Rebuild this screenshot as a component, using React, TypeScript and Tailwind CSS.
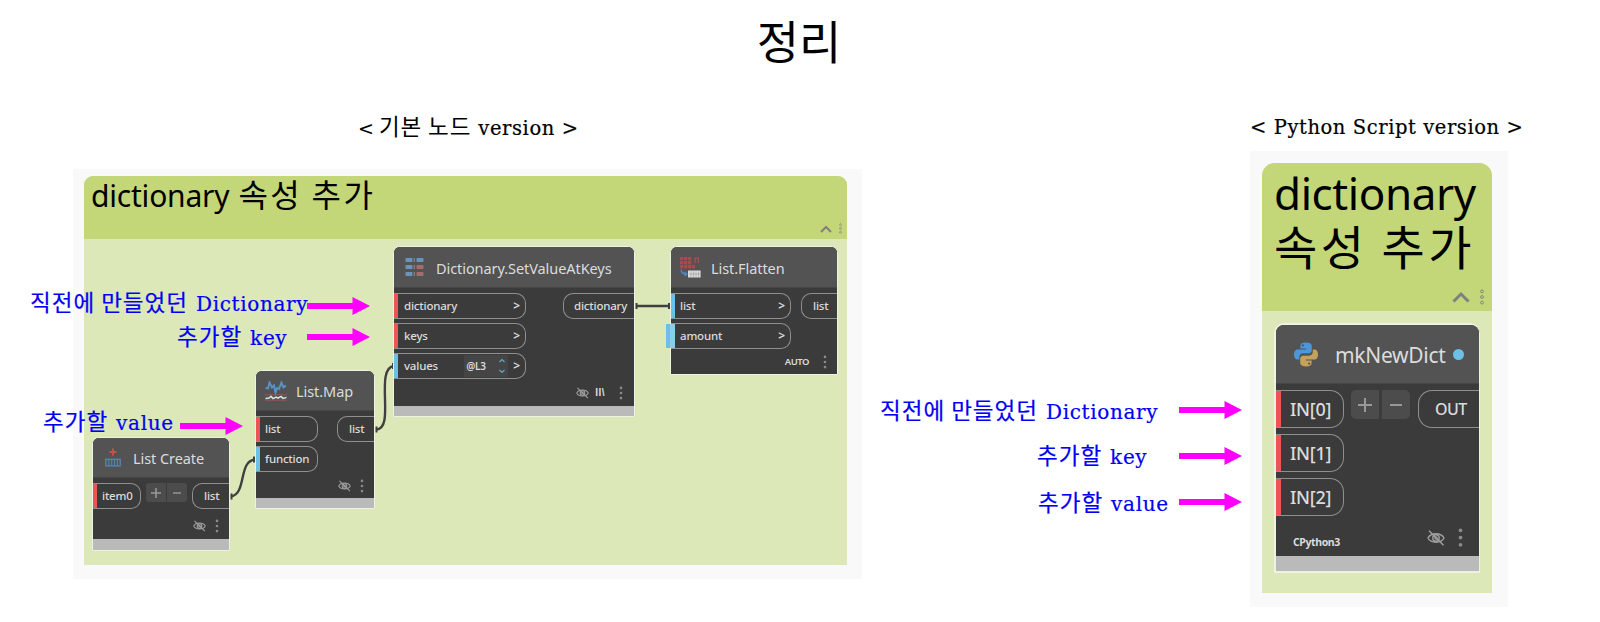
import React from 'react';

const sans = "font-['Noto_Sans','Noto_Sans_CJK_KR',sans-serif]";
const serif = "font-['DejaVu_Serif',serif]";
const hangul = "font-['Noto_Sans_CJK_KR',sans-serif]";

/* ---------- icons ---------- */

function EyeOff({ className }: { className: string }) {
  return (
    <svg viewBox="0 0 18 16" className={className} fill="none" stroke="#a0a0a0" strokeWidth="1.4">
      <path d="M1 8C4 2.4 14 2.4 17 8C14 13.6 4 13.6 1 8Z" />
      <circle cx="9" cy="8" r="3.2" />
      <circle cx="9" cy="8" r="1" />
      <path d="M2 0.8L16.500 15.200" />
    </svg>
  );
}

function Dots({ className }: { className: string }) {
  return (
    <svg viewBox="0 0 4 16" className={className} fill="#8a8a8a">
      <circle cx="2" cy="2.2" r="1.5" />
      <circle cx="2" cy="8" r="1.5" />
      <circle cx="2" cy="13.8" r="1.5" />
    </svg>
  );
}

function RingDots({ className }: { className: string }) {
  return (
    <svg viewBox="0 0 4 16" className={className} fill="none" stroke="#84887a" strokeWidth="1">
      <circle cx="2" cy="2.4" r="1.4" />
      <circle cx="2" cy="8" r="1.4" />
      <circle cx="2" cy="13.6" r="1.4" />
    </svg>
  );
}

function Caret({ className }: { className: string }) {
  return (
    <svg viewBox="0 0 18 12" className={className} fill="none" stroke="#808080" strokeWidth="3">
      <path d="M1.5 10.5L9 3L16.5 10.5" />
    </svg>
  );
}

function DictIcon() {
  const rows = [0, 7, 14];
  return (
    <svg viewBox="0 0 19 18" className="h-[18px] w-[19px] shrink-0">
      {rows.map((y) => (
        <g key={y}>
          <rect x="0.5" y={y} width="7" height="4" rx="0.8" fill="#6c93be" />
          <rect x="8.7" y={y} width="1.4" height="4" fill="#7f7f7f" />
          <rect x="11.5" y={y} width="7" height="4" rx="0.8" fill={y === 0 ? '#6c93be' : '#a86a6a'} />
        </g>
      ))}
    </svg>
  );
}

function FlattenIcon() {
  return (
    <svg viewBox="0 0 21 21" className="h-[21px] w-[21px] shrink-0">
      {[0, 4, 8].map((y) =>
        [0, 4, 8].map((x) => <rect key={`${x}-${y}`} x={x} y={y} width="3.3" height="3.3" fill="#b04848" />),
      )}
      <rect x="12" y="8" width="3" height="3.3" fill="#b04848" />
      <path d="M15 6V1.2H18.4V6" fill="none" stroke="#a05252" strokeWidth="1.3" />
      <path d="M1.2 12.5C1.2 15.5 3 17 6 17M4.4 15L6.8 17L4.6 19" fill="none" stroke="#4d86c4" strokeWidth="1.5" />
      <rect x="8" y="13.5" width="12.6" height="7" fill="#dcdcdc" />
      <path d="M9 17H20M11 14.5V20M13.5 14.5V20M16 14.5V20M18.5 14.5V20" stroke="#9a9a9a" strokeWidth="0.6" />
    </svg>
  );
}

function MapIcon() {
  return (
    <svg viewBox="0 0 22 20" className="h-5 w-[22px] shrink-0" fill="none">
      <path d="M0.5 7L3 7.5L4.5 1.5L7 6.5L9 4.5L10.5 11.5L12 7L14 8L16.5 1.5L18.5 6.5L21 4.5" stroke="#5b92c7" strokeWidth="1.9" />
      <path d="M0 13.8H22M0 19.2H22" stroke="#9a5656" strokeWidth="1" />
      <path d="M0.5 17.4L4 17L6 15.4L8 17.6L11 16L13 17.2L16 15.4L18 17.4L21.5 16.4" stroke="#e0e0e0" strokeWidth="1.5" />
    </svg>
  );
}

function CreateIcon() {
  return (
    <svg viewBox="0 0 16 19" className="h-[19px] w-4 shrink-0" fill="none">
      <path d="M8 0.5V7.5M4.5 4H11.5" stroke="#d24b4b" strokeWidth="1.9" />
      <rect x="0.8" y="11.3" width="14.4" height="6.6" stroke="#4d88c0" strokeWidth="1.3" />
      <path d="M3.8 11V18M6.7 11V18M9.5 11V18M12.3 11V18" stroke="#4d88c0" strokeWidth="1.1" />
    </svg>
  );
}

function PythonIcon() {
  return (
    <svg viewBox="0 0 24 24" className="h-[25px] w-6 shrink-0">
      <path
        fill="#4a97dc"
        d="M11.6 0C8 0 6.4 1.2 6.4 3.4V6H12.2V7H3.6C1.2 7 0 9 0 12C0 15 1.2 17 3.6 17H5.4V14.2C5.4 12 7 10.8 9 10.8H14.8C16.6 10.8 17.8 9.4 17.8 7.8V3.4C17.8 1.2 15.6 0 11.6 0ZM8.8 1.8A1.1 1.1 0 1 1 8.8 4A1.1 1.1 0 1 1 8.8 1.8Z"
      />
      <path
        fill="#c4a25a"
        d="M12.4 24C16 24 17.6 22.8 17.6 20.6V18H11.8V17H20.4C22.8 17 24 15 24 12C24 9 22.8 7 20.4 7H18.8V9.6C18.8 11.8 17 13.2 15 13.2H9.2C7.4 13.2 6.2 14.6 6.2 16.2V20.6C6.2 22.8 8.4 24 12.4 24ZM15.2 22.2A1.1 1.1 0 1 1 15.2 20A1.1 1.1 0 1 1 15.2 22.2Z"
      />
    </svg>
  );
}

function Arrow({ className }: { className: string }) {
  return (
    <svg viewBox="0 0 63 18" className={`absolute h-[18px] w-[63px] ${className}`}>
      <path d="M0 6H45.5V0L63 9L45.5 18V12H0Z" fill="#ff00ff" />
    </svg>
  );
}

/* ---------- node parts ---------- */

type NodeProps = {
  className: string;
  header: string;
  icon: React.ReactNode;
  title: React.ReactNode;
  footer?: string;
  children: React.ReactNode;
};

function GraphNode({ className, header, icon, title, footer, children }: NodeProps) {
  return (
    <section
      className={`absolute flex flex-col border-[#eef2e4] bg-[#3b3b3b] text-[#dcdcdc] ${sans} ${className}`}
    >
      <header className={`flex shrink-0 items-center border-b border-[#464646] bg-[#535353] ${header}`}>
        {icon}
        {title}
      </header>
      <div className="flex min-h-0 flex-1 flex-col">{children}</div>
      {footer && <div className={`shrink-0 bg-[#bababa] ${footer}`} />}
    </section>
  );
}

function Title({ children }: { children: string }) {
  return <h3 className="pt-0.5 text-[14.5px] leading-none tracking-[-0.07px]">{children}</h3>;
}

const small = 'h-[26px] text-[11.5px] tracking-[-0.2px] rounded-r-[10px]';
const smallOut = 'h-[26px] text-[11.5px] tracking-[-0.2px] rounded-l-[10px]';
const large = 'h-[38px] text-[18px] tracking-[-0.3px] rounded-r-[14px]';

function InPort({
  label,
  blue,
  size = small,
  bar = 'mr-[5px] w-1',
  className,
  children,
}: {
  label: string;
  blue?: boolean;
  size?: string;
  bar?: string;
  className: string;
  children?: React.ReactNode;
}) {
  return (
    <div
      className={`flex items-center border border-l-0 border-[#8f8f8f] leading-none font-medium ${size} ${className}`}
    >
      <span className={`h-full shrink-0 ${bar} ${blue ? 'bg-[#6ac0e7]' : 'bg-[#eb5555]'}`} />
      <span>{label}</span>
      {children}
    </div>
  );
}

function OutPort({ label, size = smallOut, className }: { label: string; size?: string; className: string }) {
  return (
    <div
      className={`flex items-center border border-r-0 border-[#8f8f8f] leading-none font-medium ${size} ${className}`}
    >
      {label}
    </div>
  );
}

function Level() {
  return <span className="mr-[5px] ml-auto text-[12px] font-semibold">&gt;</span>;
}

/* ---------- captions ---------- */

function Caption({ ko, en, className }: { ko: string; en: string; className: string }) {
  return (
    <p className={`absolute flex h-8 items-baseline whitespace-pre text-[#0000f5] [-webkit-text-stroke:0.2px_#0000f5] ${className}`}>
      <span className={`text-[22.5px] leading-8 tracking-[1px] ${hangul}`}>{ko}</span>
      <span className={`ml-2 text-[20px] leading-8 tracking-[0.65px] ${serif}`}>{en}</span>
    </p>
  );
}

export default function App() {
  return (
    <main className="relative h-[622px] w-[1600px] overflow-hidden bg-white text-black">
      <h1 className={`pt-[9px] pr-0.5 text-center text-[46px] leading-[60px] ${hangul}`}>정리</h1>

      <h2 className="absolute top-[109px] left-[358px] flex items-baseline whitespace-pre">
        <span className={`text-[19px] leading-8 ${serif}`}>&lt;</span>
        <span className={`ml-[5px] text-[22.5px] leading-8 tracking-[0.9px] ${hangul}`}>기본 노드</span>
        <span className={`ml-[7px] text-[19.5px] leading-8 tracking-[0.6px] [-webkit-text-stroke:0.2px_#000] ${serif}`}>version &gt;</span>
      </h2>
      <h2
        className={`absolute top-[112px] left-[1250px] text-[19.5px] leading-8 tracking-[0.58px] whitespace-pre [-webkit-text-stroke:0.2px_#000] ${serif}`}
      >
        &lt; Python Script version &gt;
      </h2>

      {/* Built-in node graph */}
      <div className="absolute top-[169px] left-[73px] h-[410px] w-[789px] bg-[#f9f9f9]">
        <div className="mt-[7px] ml-[11px] flex h-[389px] w-[763px] flex-col rounded-t-[9px] bg-[#dce8b8]">
          <div className={`relative flex h-[63px] items-start rounded-t-[9px] bg-[#c3d778] pl-[7px] ${sans}`}>
            <span className="text-[30px] leading-[40px] tracking-[-0.2px]">dictionary</span>
            <span className={`ml-[9px] text-[32px] leading-[35px] tracking-[2.4px] ${hangul}`}>속성 추가</span>
            <Caret className="absolute right-[15px] bottom-[6px] h-2 w-3" />
            <RingDots className="absolute right-[5px] bottom-[5px] h-[11px] w-[3px]" />
          </div>
        </div>
      </div>

      <svg className="absolute top-0 left-0 h-[622px] w-[900px]" fill="none" stroke="#404040" strokeWidth="2.4">
        <path d="M636 306H670" />
        <path d="M231 496.500C247 494 238 461 255 459.500" />
        <path d="M376 429.500C396 430 374 368 394 366" />
        <path d="M636.500 303V309M669 303V309M231.500 493.500V499.500M254 456.500V462.500M376.500 426.500V432.500M393 363V369" strokeWidth="2" />
      </svg>

      <GraphNode
        className="top-[246px] left-[393px] h-[171px] w-[242px] rounded-t-[7px] border"
        header="h-[41px] gap-3 rounded-t-[6px] pl-[11px]"
        icon={<DictIcon />}
        title={<Title>Dictionary.SetValueAtKeys</Title>}
        footer="h-[10px]"
      >
        <div className="flex items-start justify-between pt-[5px]">
          <div className="flex w-[132px] flex-col gap-1">
            <InPort label="dictionary" bar="mr-1.5 w-1" className="w-full"><Level /></InPort>
            <InPort label="keys" bar="mr-1.5 w-1" className="w-full"><Level /></InPort>
            <InPort label="values" bar="mr-1.5 w-1" blue className="w-full">
              <span className="ml-auto flex h-[22px] w-[44px] items-center justify-between bg-[#454545] pr-[3px] pl-0.5 text-[10px] font-semibold">
                @L3
                <svg viewBox="0 0 6 16" className="h-4 w-1.5" fill="none" stroke="#5fa9c9" strokeWidth="1.2">
                  <path d="M0.500 4L3 1.500L5.500 4M0.500 12L3 14.500L5.500 12" />
                </svg>
              </span>
              <span className="mr-[5px] ml-[5px] text-[12px] font-semibold">&gt;</span>
            </InPort>
          </div>
          <OutPort label="dictionary" className="w-[71px] pl-2.5" />
        </div>
        <div className="mt-[7px] flex items-center justify-end pr-[11px]">
          <EyeOff className="h-3 w-[13px]" />
          <span className="mr-[14px] ml-1.5 font-['Liberation_Sans',sans-serif] text-[10px] leading-none font-semibold tracking-[0.5px]">
            II\
          </span>
          <Dots className="h-[14px] w-[4px]" />
        </div>
      </GraphNode>

      <GraphNode
        className="top-[246px] left-[670px] h-[129px] w-[168px] rounded-t-[7px] border"
        header="h-[41px] gap-[10px] rounded-t-[6px] pl-[9px]"
        icon={<FlattenIcon />}
        title={<Title>List.Flatten</Title>}
      >
        <div className="flex items-start justify-between pt-[5px]">
          <div className="flex w-[120px] flex-col gap-1">
            <InPort label="list" blue className="w-full"><Level /></InPort>
            <InPort label="amount" blue className="w-full"><Level /></InPort>
          </div>
          <OutPort label="list" className="w-[36px] pl-[11px]" />
        </div>
        <div className="mt-1.5 flex items-center justify-end pr-[10px]">
          <span className="mr-[14px] text-[9.5px] leading-none font-semibold tracking-[-0.5px]">AUTO</span>
          <Dots className="h-[14px] w-[4px]" />
        </div>
      </GraphNode>
      <span className="absolute top-[324px] left-[666px] h-6 w-[9px] border-r-[5px] border-[#8ccdec] bg-[#6ac0e7]" />

      <GraphNode
        className="top-[370px] left-[255px] h-[139px] w-[120px] rounded-t-[7px] border"
        header="h-10 gap-[9px] rounded-t-[6px] pl-[9px]"
        icon={<MapIcon />}
        title={<Title>List.Map</Title>}
        footer="h-[10px]"
      >
        <div className="flex items-start justify-between pt-[5px]">
          <div className="flex w-[62px] flex-col gap-1">
            <InPort label="list" className="w-full" />
            <InPort label="function" blue className="w-full" />
          </div>
          <OutPort label="list" className="w-[37px] pl-[11px]" />
        </div>
        <div className="mt-[7px] flex items-center justify-end gap-[9px] pr-[10px]">
          <EyeOff className="h-3 w-[13px]" />
          <Dots className="h-[14px] w-[4px]" />
        </div>
      </GraphNode>

      <GraphNode
        className="top-[437px] left-[92px] h-[114px] w-[138px] rounded-t-[7px] border"
        header="h-10 gap-3 rounded-t-[6px] pl-3"
        icon={<CreateIcon />}
        title={<Title>List Create</Title>}
        footer="h-[11px]"
      >
        <div className="flex items-start pt-[5px]">
          <InPort label="item0" className="w-[48px]" />
          <div className="ml-[5px] flex gap-px">
            <span className="flex h-[19px] w-5 items-center justify-center rounded-l-[3px] bg-[#4c4c4c]">
              <svg viewBox="0 0 10 10" className="size-2.5" stroke="#999999" strokeWidth="1.5"><path d="M0 5H10M5 0V10" /></svg>
            </span>
            <span className="flex h-[19px] w-5 items-center justify-center rounded-r-[3px] bg-[#4c4c4c]">
              <svg viewBox="0 0 10 10" className="size-2" stroke="#999999" strokeWidth="1.8"><path d="M0 5H10" /></svg>
            </span>
          </div>
          <OutPort label="list" className="ml-auto w-[37px] pl-[11px]" />
        </div>
        <div className="mt-[10px] flex items-center justify-end gap-[9px] pr-[10px]">
          <EyeOff className="h-3 w-[13px]" />
          <Dots className="h-[14px] w-[4px]" />
        </div>
      </GraphNode>

      {/* Python script node */}
      <div className="absolute top-[151px] left-[1250px] h-[456px] w-[258px] bg-[#f9f9f9]">
        <div className="mt-3 ml-3 flex h-[430px] w-[230px] flex-col rounded-t-[13px] bg-[#dce8b8]">
          <div className={`relative h-[148px] rounded-t-[13px] bg-[#c3d778] pt-[3px] pl-3 ${sans}`}>
            <div className="text-[44px] leading-[54px] tracking-[-0.4px]">dictionary</div>
            <div className={`text-[47px] leading-[50px] tracking-[3.5px] whitespace-nowrap ${hangul}`}>속성 추가</div>
            <Caret className="absolute right-[22px] bottom-2 h-3 w-[18px]" />
            <RingDots className="absolute right-2 bottom-1.5 h-4 w-1" />
          </div>
        </div>
      </div>

      <GraphNode
        className="top-[323px] left-[1274px] h-[250px] w-[206px] rounded-t-[10px] border-2 border-r"
        header="h-[59px] rounded-t-[8px] pl-[18px]"
        icon={<PythonIcon />}
        title={
          <>
            <h3 className="mt-0.5 ml-[17px] text-[21px] leading-none tracking-[-0.3px]">mkNewDict</h3>
            <span className="ml-2 size-[11px] shrink-0 rounded-full bg-[#6ac0e7]" />
          </>
        }
        footer="h-[15px]"
      >
        <div className="flex items-start pt-1.5">
          <div className="flex w-[68px] flex-col gap-1.5">
            <InPort label="IN[0]" size={large} bar="mr-[9px] w-[5px]" className="w-full" />
            <InPort label="IN[1]" size={large} bar="mr-[9px] w-[5px]" className="w-full" />
            <InPort label="IN[2]" size={large} bar="mr-[9px] w-[5px]" className="w-full" />
          </div>
          <div className="ml-[7px] flex gap-[3px]">
            <span className="flex h-[29px] w-7 items-center justify-center rounded-l-[5px] bg-[#4c4c4c]">
              <svg viewBox="0 0 14 14" className="size-3.5" stroke="#999999" strokeWidth="2"><path d="M0 7H14M7 0V14" /></svg>
            </span>
            <span className="flex h-[29px] w-7 items-center justify-center rounded-r-[5px] bg-[#4c4c4c]">
              <svg viewBox="0 0 12 12" className="size-3" stroke="#999999" strokeWidth="2"><path d="M0 6H12" /></svg>
            </span>
          </div>
          <OutPort
            label="OUT"
            size="h-[38px] text-[16px] tracking-[-0.5px] rounded-l-[14px]"
            className="ml-auto w-[61px] pl-4"
          />
        </div>
        <div className="flex items-center pt-[11px] pr-4 pl-[17px]">
          <span className="mt-2.5 text-[10.5px] leading-none font-bold tracking-[-0.4px]">CPython3</span>
          <EyeOff className="ml-auto h-4 w-[18px]" />
          <Dots className="ml-[13px] h-[21px] w-[5px]" />
        </div>
      </GraphNode>

      <Caption ko="직전에 만들었던" en="Dictionary" className="top-[285px] left-[30px]" />
      <Caption ko="추가할" en="key" className="top-[319px] left-[177px]" />
      <Caption ko="추가할" en="value" className="top-[404px] left-[43px]" />
      <Caption ko="직전에 만들었던" en="Dictionary" className="top-[393px] left-[880px]" />
      <Caption ko="추가할" en="key" className="top-[438px] left-[1037px]" />
      <Caption ko="추가할" en="value" className="top-[485px] left-[1038px]" />

      <Arrow className="top-[297px] left-[307px]" />
      <Arrow className="top-[328px] left-[307px]" />
      <Arrow className="top-[417px] left-[180px]" />
      <Arrow className="top-[401px] left-[1179px]" />
      <Arrow className="top-[447px] left-[1179px]" />
      <Arrow className="top-[493px] left-[1179px]" />
    </main>
  );
}
